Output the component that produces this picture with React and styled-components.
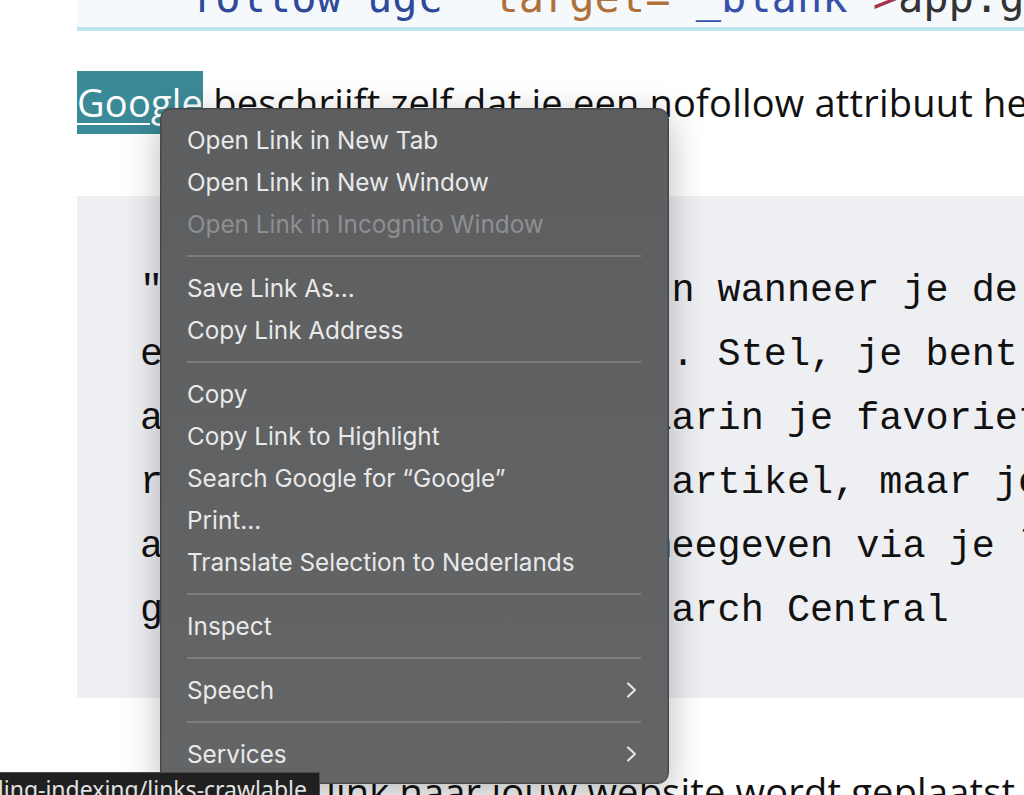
import React from "react"
import styled, { createGlobalStyle } from "styled-components"

const GlobalStyle = createGlobalStyle`
  html, body {
    margin: 0;
    padding: 0;
    background: #ffffff;
    overflow: hidden;
  }
  #root {
    width: 1024px;
    height: 795px;
    overflow: hidden;
  }
`

const Page = styled("div")`
  position: relative;
  width: 1024px;
  height: 795px;
  padding-left: 77px;
  box-sizing: border-box;
  overflow: hidden;
`

const CodeBlock = styled("pre")`
  margin: -27px 0 0;
  padding: 0 0 4px 113px;
  background: #f6f9fc;
  border-bottom: 4px solid #bde5f4;
  font-family: "DejaVu Sans Mono", monospace;
  font-size: 42px;
  line-height: 50px;
  color: #2f4a9a;
  white-space: pre;
  overflow: hidden;
`

const Tok = styled("span")`
  color: ${p => p.$c};
`

const Paragraph = styled("p")`
  margin: ${p => p.$top}px 0 0;
  font-family: "Open Sans", "Noto Sans", sans-serif;
  font-size: 38px;
  line-height: 63px;
  letter-spacing: 0.2px;
  color: #111;
  white-space: nowrap;
  overflow: hidden;
`

const Selected = styled("a")`
  background: #3b8a97;
  color: #ffffff;
  padding: 6px 0;
  text-decoration: underline;
  text-decoration-thickness: 2px;
  text-underline-offset: 6px;
`

const Quote = styled("pre")`
  margin: 62px 0 0;
  padding: 63px 0 55px 63px;
  background: #eeeff3;
  font-family: "Liberation Mono", "Courier New", monospace;
  font-size: 38.5px;
  line-height: 64px;
  color: #111;
  white-space: pre;
  overflow: hidden;
`

const Menu = styled("div")`
  position: absolute;
  left: 160px;
  top: 108px;
  width: 509px;
  box-sizing: border-box;
  padding: 10px 0 8px;
  border-radius: 11px;
  background: linear-gradient(#5d5e60, #646567);
  border: 1px solid #454648;
  box-shadow: 0 0 0 0.5px rgba(0, 0, 0, 0.25) inset,
    0 10px 36px rgba(0, 0, 0, 0.28);
  font-family: Inter, "Noto Sans", sans-serif;
`

const Item = styled("div")`
  display: flex;
  align-items: center;
  justify-content: space-between;
  height: 42px;
  padding: 0 30px 0 26px;
  font-size: 24.3px;
  color: ${p => (p.$disabled ? "#8e8f91" : "#e9e9e9")};
`

const Separator = styled("div")`
  height: 22px;
  margin: 0 27px 0 26px;
  display: flex;
  align-items: center;
  &::after {
    content: "";
    flex: 1;
    height: 1.5px;
    background: #7b7c7e;
  }
`

const Chevron = () => (
  <svg width="14" height="18" viewBox="0 0 14 18">
    <polyline
      points="4,2.5 11,9 4,15.5"
      fill="none"
      stroke="#e2e2e2"
      strokeWidth="2.2"
      strokeLinecap="round"
      strokeLinejoin="round"
    />
  </svg>
)

const StatusBar = styled("div")`
  position: absolute;
  left: 0;
  bottom: 0;
  width: 320px;
  height: 23px;
  box-sizing: border-box;
  background: #202020;
  border-top: 1px solid #4a4a4a;
  border-right: 1px solid #4a4a4a;
  display: flex;
  justify-content: flex-end;
  overflow: hidden;
  font-family: "Noto Sans", "Open Sans", sans-serif;
  font-size: 23px;
  line-height: 32px;
  color: #e2e2e2;
  white-space: nowrap;
  padding-right: 12px;
`

const groups = [
  [
    { label: "Open Link in New Tab" },
    { label: "Open Link in New Window" },
    { label: "Open Link in Incognito Window", disabled: true },
  ],
  [{ label: "Save Link As..." }, { label: "Copy Link Address" }],
  [
    { label: "Copy" },
    { label: "Copy Link to Highlight" },
    { label: "Search Google for \u201cGoogle\u201d" },
    { label: "Print..." },
    { label: "Translate Selection to Nederlands" },
  ],
  [{ label: "Inspect" }],
  [{ label: "Speech", sub: true }],
  [{ label: "Services", sub: true }],
]

const quoteLines = [
  "\"Gebruik nofollow alleen wanneer je de",
  "een site niet vertrouwt. Stel, je bent",
  "aan een nieuw recept waarin je favoriete",
  "recepten noemt in jouw artikel, maar je",
  "aan Google niets wilt meegeven via je link",
  "gebruik nofollow.\" - Search Central",
]

const ContextMenu = () => (
  <Menu>
    {groups.map((g, gi) => (
      <React.Fragment key={gi}>
        {gi > 0 && <Separator />}
        {g.map(it => (
          <Item key={it.label} $disabled={it.disabled}>
            <span>{it.label}</span>
            {it.sub && <Chevron />}
          </Item>
        ))}
      </React.Fragment>
    ))}
  </Menu>
)

export default function App() {
  return (
    <>
      <GlobalStyle />
      <Page>
        <CodeBlock>
          follow ugc" <Tok $c="#b0703a">target=</Tok>
          <Tok $c="#3552a8">"_blank"</Tok>
          <Tok $c="#a8344c">&gt;</Tok>
          <Tok $c="#333">app.gumroad.com&lt;/a&gt;</Tok>
        </CodeBlock>
        <Paragraph $top={40}>
          <Selected>Google</Selected> beschrijft zelf dat je een nofollow
          attribuut hebt
        </Paragraph>
        <Quote>{quoteLines.join("\n")}</Quote>
        <Paragraph $top={62}>
          Wanneer een link naar jouw website wordt geplaatst
        </Paragraph>
        <ContextMenu />
        <StatusBar>
          https://developers.google.com/search/docs/crawling-indexing/links-crawlable
        </StatusBar>
      </Page>
    </>
  )
}
